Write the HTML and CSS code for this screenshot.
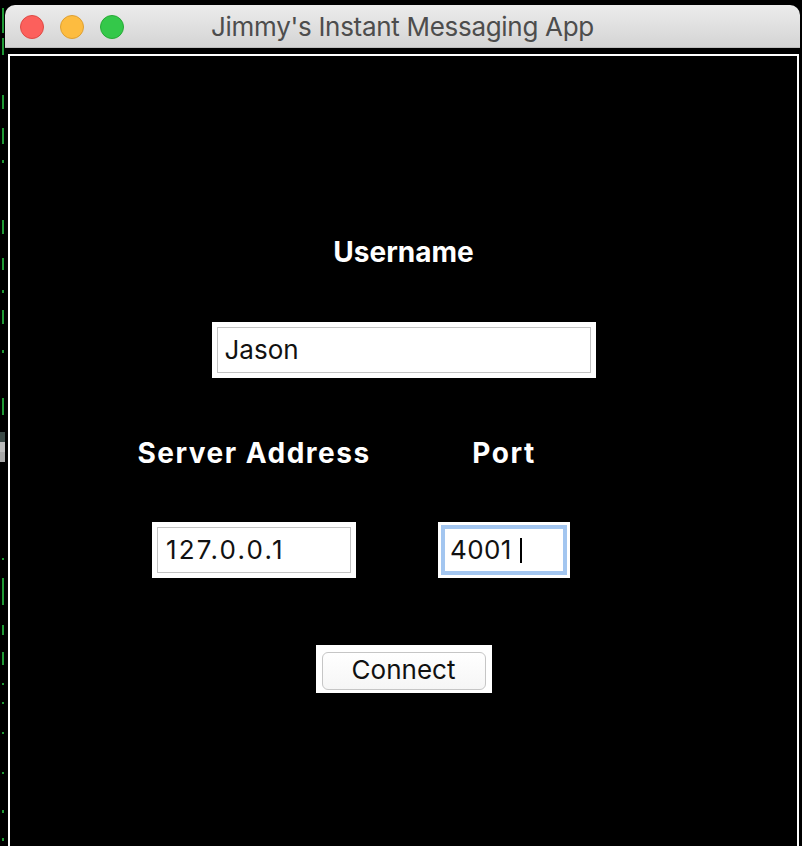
FILE: index.html
```html
<!DOCTYPE html>
<html lang="en">
<head>
<meta charset="utf-8">
<title>Jimmy's Instant Messaging App</title>
<link rel="stylesheet" href="styles.css">
</head>
<body>
<div class="desktop">
  <div class="term">
    <span class="mark" style="top:8px;height:25px"></span>
    <span class="mark" style="top:38px;height:17px"></span>
    <span class="mark" style="top:95px;height:14px"></span>
    <span class="mark" style="top:128px;height:16px"></span>
    <span class="mark" style="top:160px;height:3px"></span>
    <span class="mark" style="top:220px;height:14px"></span>
    <span class="mark" style="top:258px;height:12px"></span>
    <span class="mark" style="top:290px;height:3px"></span>
    <span class="mark" style="top:310px;height:14px"></span>
    <span class="mark" style="top:350px;height:3px"></span>
    <span class="mark" style="top:398px;height:17px"></span>
    <span class="block"></span>
    <span class="mark" style="top:558px;height:2px"></span>
    <span class="mark" style="top:578px;height:27px"></span>
    <span class="mark" style="top:625px;height:10px"></span>
    <span class="mark" style="top:652px;height:13px"></span>
    <span class="mark" style="top:683px;height:2px"></span>
    <span class="mark" style="top:702px;height:2px"></span>
    <span class="mark" style="top:732px;height:2px"></span>
    <span class="mark" style="top:772px;height:2px"></span>
    <span class="mark" style="top:810px;height:3px"></span>
    <span class="mark" style="top:838px;height:3px"></span>
  </div>
  <div class="window">
    <div class="titlebar">
      <div class="lights">
        <span class="light red"></span>
        <span class="light yellow"></span>
        <span class="light green"></span>
      </div>
      <div class="title">Jimmy's Instant Messaging App</div>
      <div class="spacer"></div>
    </div>
    <div class="body">
      <div class="frame">
        <div class="label user-label">Username</div>
        <div class="entry user-entry"><div class="field">Jason</div></div>
        <div class="row">
          <div class="col col-server">
            <div class="label wide">Server Address</div>
            <div class="entry server-entry"><div class="field spaced">127.0.0.1</div></div>
          </div>
          <div class="col col-port">
            <div class="label wide">Port</div>
            <div class="entry port-entry"><div class="field focus">4001<span class="caret"></span></div></div>
          </div>
        </div>
        <div class="btn-wrap"><div class="btn">Connect</div></div>
      </div>
    </div>
  </div>
</div>
</body>
</html>
```

FILE: styles.css
```css
* { box-sizing: border-box; }
html, body { margin: 0; padding: 0; background: #000; overflow: hidden; }
body { width: 802px; height: 846px; font-family: Inter, "Liberation Sans", sans-serif; }

.desktop { display: flex; height: 846px; overflow: hidden; }

.term { position: relative; width: 5px; flex: none; }
.mark { position: absolute; left: 2px; width: 2px; background: #1f9a35; }
.block { position: absolute; left: 0; top: 432px; width: 5px; height: 30px;
  background: linear-gradient(#3b4a47 0, #3b4a47 10px, #bdbdbd 10px, #bdbdbd 20px, #a9a9a9 20px); }

.window { width: 795px; margin-top: 5px; display: flex; flex-direction: column; overflow: hidden; }

.titlebar {
  flex: none;
  height: 43px;
  display: grid;
  grid-template-columns: 1fr auto 1fr;
  align-items: center;
  background: linear-gradient(#ececec, #d4d4d4);
  border-radius: 10px 10px 0 0;
  border-bottom: 1px solid #bdbdbd;
}
.lights { display: flex; gap: 16px; padding-left: 15px; padding-top: 2px; }
.light { width: 24px; height: 24px; border-radius: 50%; }
.red { background: #fc605c; border: 1px solid #de4a44; }
.yellow { background: #fdbc40; border: 1px solid #dea032; }
.green { background: #34c84a; border: 1px solid #27aa36; }
.title { font-size: 26px; letter-spacing: -0.3px; color: #4d4d4d; line-height: 34px; white-space: nowrap; padding-top: 2px; }

.body { flex: none; padding: 6px 1px 0 3px; background: #000; }
.frame { border: 2px solid #fff; height: 820px; background: #000; }

.label { color: #fff; font-weight: 700; font-size: 28px; line-height: 34px; text-align: center; white-space: nowrap; }
.label.wide { letter-spacing: 1.5px; }
.user-label { margin-top: 179px; }

.entry { background: #fff; padding: 5px; height: 56px; }
.field {
  height: 46px;
  border: 1px solid #c3c3c3;
  background: #fff;
  color: #111;
  font-size: 26px;
  line-height: 44px;
  padding-left: 7px;
  white-space: nowrap;
  display: flex;
  align-items: center;
}
.field.spaced { letter-spacing: 2.2px; padding-left: 8px; }
.user-entry { width: 384px; margin: 53px auto 0; }

.row { display: flex; gap: 67px; margin-top: 58px; padding-left: 127px; }
.col { display: flex; flex-direction: column; align-items: center; }
.col-server { width: 234px; }
.col-port { width: 132px; }
.col .entry { margin-top: 52px; }
.server-entry { width: 204px; }
.port-entry { width: 132px; padding: 3px; }
.field.focus { height: 50px; border: 4px solid #a3c6f0; padding-left: 5px; letter-spacing: 0.4px; }
.caret { display: inline-block; width: 2px; height: 25px; background: #000; margin-left: 8px; }

.btn-wrap { width: 176px; height: 48px; margin: 67px auto 0; background: #fff; padding: 7px 6px 3px 6px; }
.btn {
  height: 38px;
  border: 1px solid #c6c6c6;
  border-radius: 6px;
  background: linear-gradient(#ffffff, #f6f6f6);
  font-size: 26px;
  line-height: 34px;
  text-align: center;
  color: #111;
}
```
